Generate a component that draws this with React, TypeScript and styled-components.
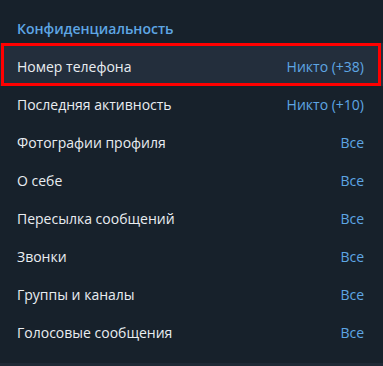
import React from "react";
import styled, { createGlobalStyle } from "styled-components";

const GlobalStyle = createGlobalStyle`
  html, body {
    margin: 0;
    padding: 0;
    background: #17212b;
  }
  body {
    font-family: "Open Sans", "Noto Sans", sans-serif;
    -webkit-font-smoothing: antialiased;
  }
`;

const Panel = styled.div`
  width: 383px;
  height: 366px;
  background: #17212b;
  display: flex;
  flex-direction: column;
  box-sizing: border-box;
  overflow: hidden;
`;

const Title = styled.div`
  height: 48px;
  box-sizing: border-box;
  padding: 19px 0 0 17px;
  font-size: 14px;
  font-weight: 600;
  line-height: 19px;
  color: #5ea6e4;
`;

const List = styled.div`
  display: flex;
  flex-direction: column;
  flex: 1;
`;

const Row = styled.div<{ $marked?: boolean }>`
  position: relative;
  height: 38px;
  display: flex;
  align-items: center;
  justify-content: space-between;
  padding: 0 19px 0 17px;
  font-size: 14px;
  line-height: 38px;
  background: ${(p) => (p.$marked ? "#232e3c" : "transparent")};
  box-shadow: ${(p) => (p.$marked ? "0 -5px 0 #232e3c" : "none")};

  ${(p) =>
    p.$marked &&
    `
    &::after {
      content: "";
      position: absolute;
      top: -5px;
      bottom: 0;
      left: 1px;
      right: 2px;
      border: 3px solid #ff0000;
      pointer-events: none;
    }
  `}
`;

const Label = styled.span`
  color: #e9edf1;
`;

const Value = styled.span`
  color: #5ea6e4;
`;

const Footer = styled.div`
  height: 3px;
  background: #1f2935;
`;

const items = [
  { label: "Номер телефона", value: "Никто (+38)", marked: true },
  { label: "Последняя активность", value: "Никто (+10)" },
  { label: "Фотографии профиля", value: "Все" },
  { label: "О себе", value: "Все" },
  { label: "Пересылка сообщений", value: "Все" },
  { label: "Звонки", value: "Все" },
  { label: "Группы и каналы", value: "Все" },
  { label: "Голосовые сообщения", value: "Все" },
];

export default function App() {
  return (
    <>
      <GlobalStyle />
      <Panel>
        <Title>Конфиденциальность</Title>
        <List>
          {items.map((it) => (
            <Row key={it.label} $marked={it.marked}>
              <Label>{it.label}</Label>
              <Value>{it.value}</Value>
            </Row>
          ))}
        </List>
        <Footer />
      </Panel>
    </>
  );
}
